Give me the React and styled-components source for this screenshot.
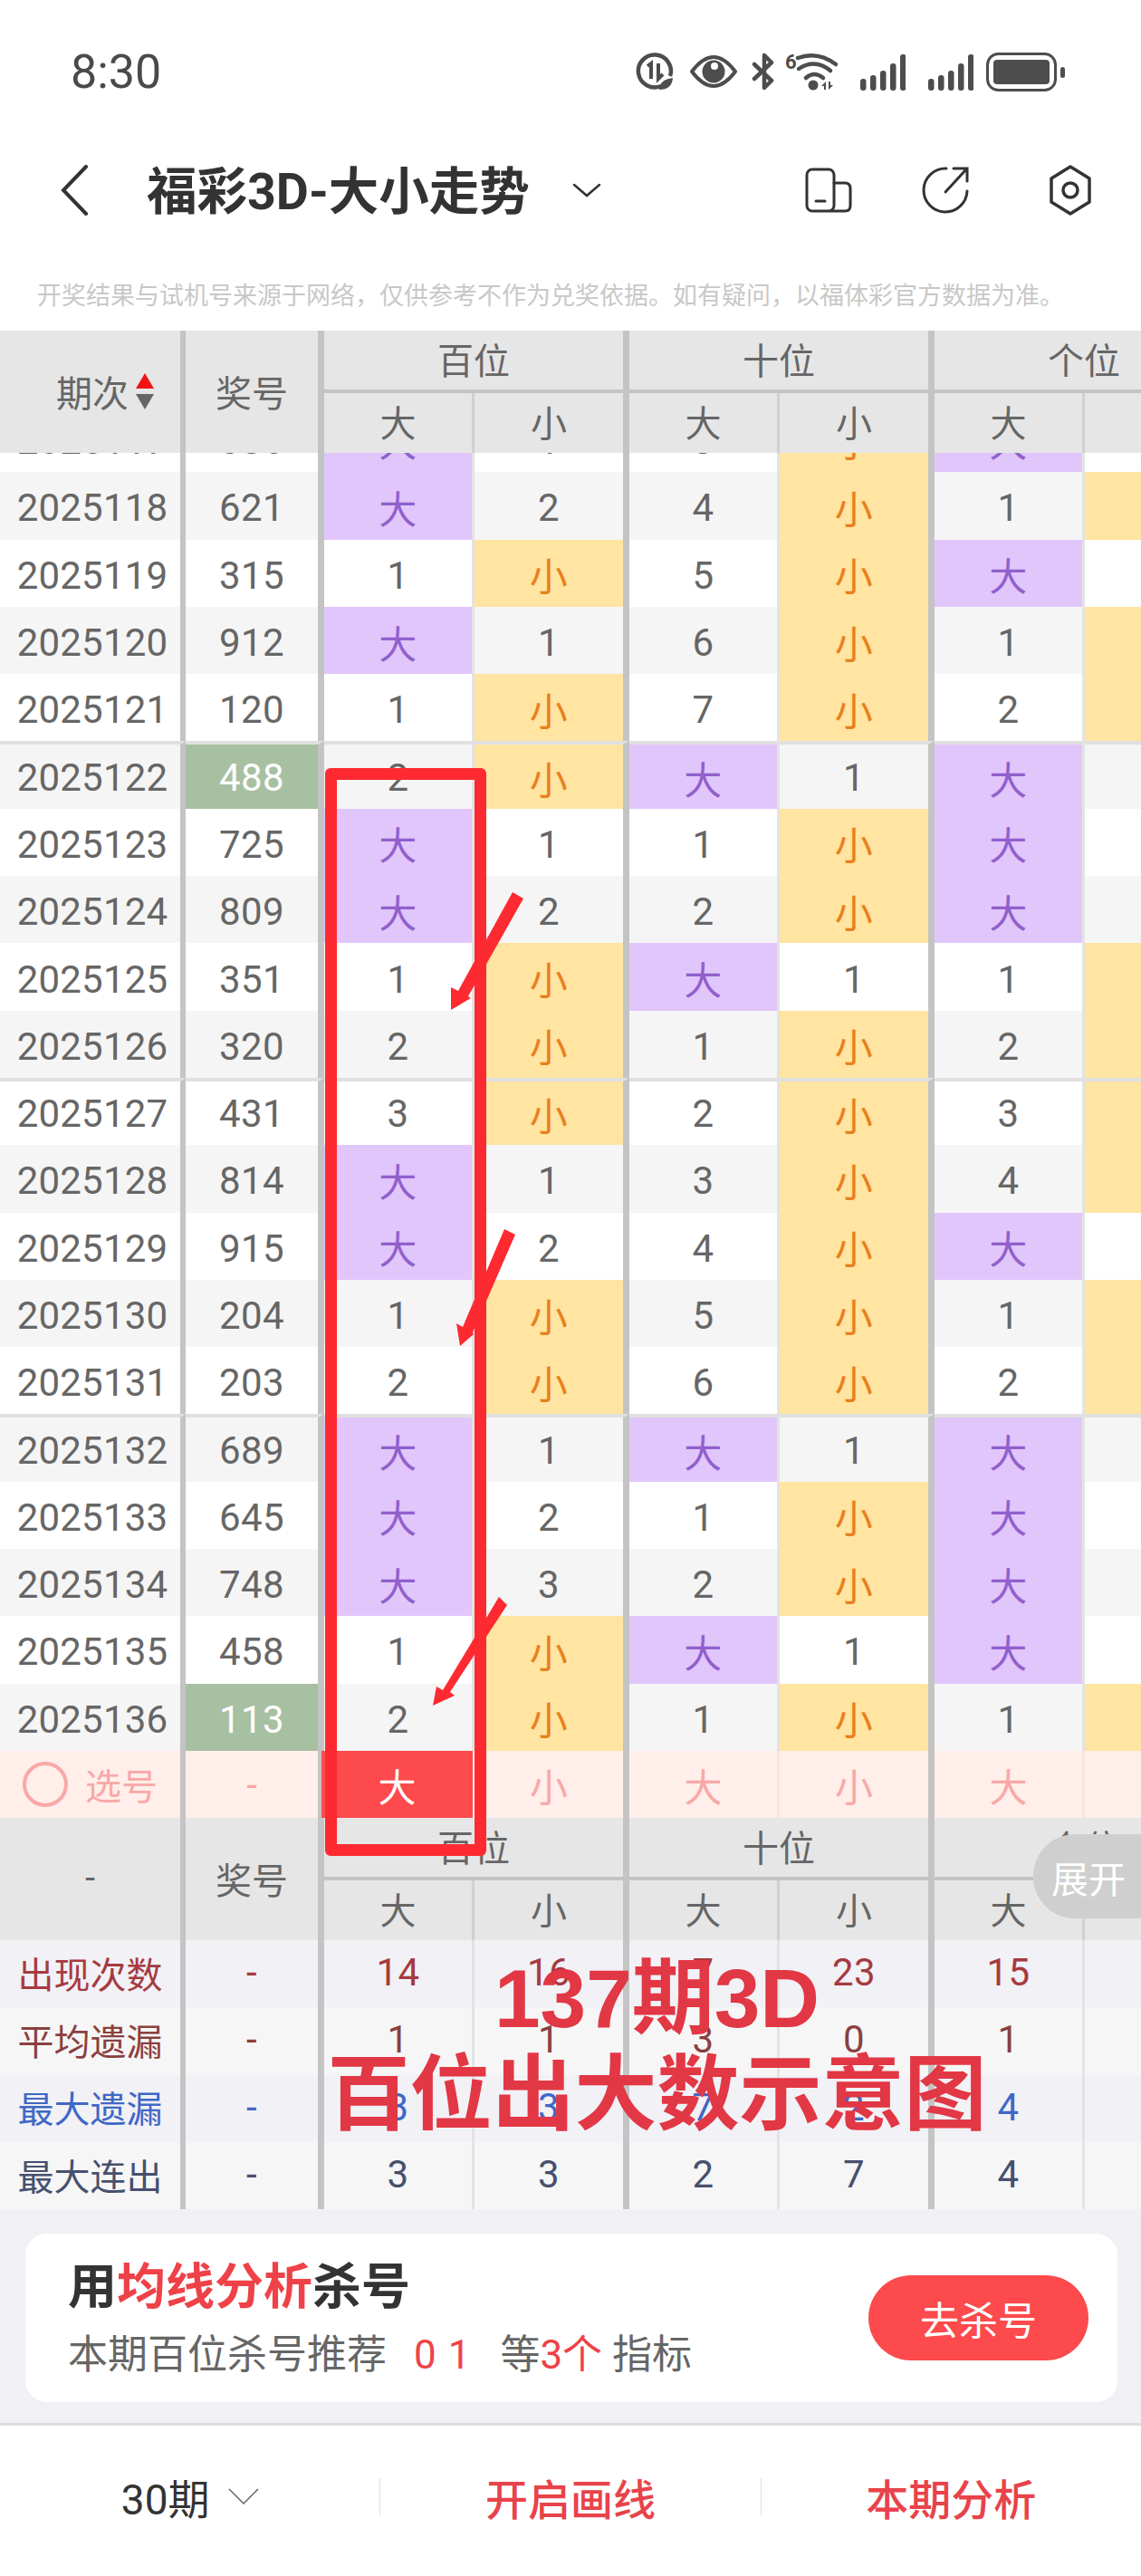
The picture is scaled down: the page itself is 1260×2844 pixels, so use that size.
import React from "react";
import styled, { createGlobalStyle } from "styled-components";

const SANS = `Roboto, "Noto Sans CJK SC", sans-serif`;
const COLUMNS = "205px 153px 166px 171px 166px 171px 166px 171px";
const THICK = "7px solid #c4c4c4";
const THIN = "3px solid #e3e3e3";

// negative = 大 on the left cell and the miss count on the right, positive = count then 小
const ROWS = [
  ["2025117", "836", -1, 3, -1],
  ["2025118", "621", -2, 4, 1],
  ["2025119", "315", 1, 5, -1],
  ["2025120", "912", -1, 6, 1],
  ["2025121", "120", 1, 7, 2],
  ["2025122", "488", 2, -1, -1, true],
  ["2025123", "725", -1, 1, -2],
  ["2025124", "809", -2, 2, -3],
  ["2025125", "351", 1, -1, 1],
  ["2025126", "320", 2, 1, 2],
  ["2025127", "431", 3, 2, 3],
  ["2025128", "814", -1, 3, 4],
  ["2025129", "915", -2, 4, -1],
  ["2025130", "204", 1, 5, 1],
  ["2025131", "203", 2, 6, 2],
  ["2025132", "689", -1, -1, -1],
  ["2025133", "645", -2, 1, -2],
  ["2025134", "748", -3, 2, -3],
  ["2025135", "458", 1, -1, -4],
  ["2025136", "113", 2, 1, 1, true],
];

const STATS = [
  ["出现次数", "#a63a3f", ["14", "16", "7", "23", "15", "7"]],
  ["平均遗漏", "#8a4040", ["1", "1", "3", "0", "1", "3"]],
  ["最大遗漏", "#3f68c6", ["3", "3", "7", "2", "4", "3"]],
  ["最大连出", "#46506e", ["3", "3", "2", "7", "4", "3"]],
];

const ARROWS = [
  "566,985 578,992 517,1100 520,1102 498,1115 498,1090 506,1094",
  "557,1357 569,1363 522,1471 523,1473 508,1486 504,1461 511,1465",
  "551,1763 560,1772 497,1868 502,1872 478,1883 482,1862 489,1866",
];

function App() {
  return (
    <Page>
      <GlobalStyle />
      <StatusBar>
        <Clock>8:30</Clock>
        <StatusIcons>
          <DataSaverIcon />
          <EyeIcon />
          <BluetoothIcon />
          <WifiIcon />
          <SignalIcon />
          <SignalIcon />
          <BatteryIcon />
        </StatusIcons>
      </StatusBar>

      <NavBar>
        <NavIcon width="32" height="56" viewBox="0 0 32 56">
          <path d="M29 2 L4 28 L29 54" strokeWidth="4" />
        </NavIcon>
        <Title>福彩3D-大小走势</Title>
        <NavIcon $ml={47} width="32" height="16" viewBox="0 0 32 16">
          <path d="M2 2 L16 14 L30 2" strokeWidth="2.5" />
        </NavIcon>
        <NavActions>
          <NavIcon width="52" height="50" viewBox="0 0 52 50">
            <rect x="2" y="2" width="30" height="46" rx="6" strokeWidth="3" />
            <path d="M32 17 H44 Q50 17 50 23 V42 Q50 48 44 48 H28" strokeWidth="3" />
            <path d="M12 37 H22" strokeWidth="3" />
          </NavIcon>
          <NavIcon $ml={77} width="52" height="52" viewBox="0 0 52 52">
            <path d="M27 2 A24 24 0 1 0 50 27" strokeWidth="3" />
            <path d="M26 28 L49 3 M35 2 H50 V16" strokeWidth="3" />
          </NavIcon>
          <NavIcon $ml={88} width="48" height="56" viewBox="0 0 48 56">
            <path d="M24 2 L45 15 V41 L24 54 L3 41 V15 Z" strokeWidth="3.5" strokeLinejoin="round" />
            <circle cx="24" cy="28" r="8" strokeWidth="3.5" />
          </NavIcon>
        </NavActions>
      </NavBar>

      <Notice>开奖结果与试机号来源于网络，仅供参考不作为兑奖依据。如有疑问，以福体彩官方数据为准。</Notice>

      <TableHeader
        first={
          <Period>
            期次
            <SortIcon width="22" height="40" viewBox="0 0 22 40">
              <polygon points="11,0 21,17 1,17" fill="#f01414" />
              <polygon points="1,23 21,23 11,40" fill="#666666" />
            </SortIcon>
          </Period>
        }
      />

      <Scroller>
        <ScrollInner>
          {ROWS.map((row, i) => (
            <DataRow key={row[0]} row={row} alt={i % 2 === 1} divider={i > 0 && i % 5 === 0} />
          ))}
          <PickRow>
            <PickCell $sep="thick6" $label>
              <PickCircle />
              选号
            </PickCell>
            <PickCell $sep="thick">-</PickCell>
            <PickedCell>大</PickedCell>
            <PickCell $sep="thick">小</PickCell>
            <PickCell $sep="thin">大</PickCell>
            <PickCell $sep="thick">小</PickCell>
            <PickCell $sep="thin">大</PickCell>
            <PickCell $sep="thick">小</PickCell>
          </PickRow>
        </ScrollInner>
      </Scroller>

      <LowerTable>
        <TableHeader first={<Dash>-</Dash>} />
        <ExpandTab>展开</ExpandTab>
      </LowerTable>

      {STATS.map(([label, color, values], i) => (
        <Row key={label} $bg={i % 2 === 0 ? "#f1f1f6" : "#f6f6f6"}>
          <StatLabel $color={color}>{label}</StatLabel>
          <Cell $sep="thick" $color={color}>-</Cell>
          {values.map((v, j) => (
            <Cell key={j} $sep={j % 2 === 0 ? "thin" : "thick"} $color={color}>{v}</Cell>
          ))}
        </Row>
      ))}

      <PromoBand>
        <PromoCard>
          <PromoText>
            <PromoTitle>用<Red>均线分析</Red>杀号</PromoTitle>
            <PromoSub>
              本期百位杀号推荐<PromoNums>0 1</PromoNums>等<Red>3个</Red> 指标
            </PromoSub>
          </PromoText>
          <PromoButton>去杀号</PromoButton>
        </PromoCard>
      </PromoBand>

      <Footer>
        <FooterItem>
          30期
          <FooterChevron width="34" height="18" viewBox="0 0 34 18">
            <path d="M1 1 L17 17 L33 1" />
          </FooterChevron>
        </FooterItem>
        <FooterDivider />
        <FooterItem $red>开启画线</FooterItem>
        <FooterDivider />
        <FooterItem $red>本期分析</FooterItem>
      </Footer>

      <MarkBox />
      <MarkArrows width="1260" height="2844" viewBox="0 0 1260 2844">
        {ARROWS.map((points) => (
          <polygon key={points} points={points} fill="#fe2a31" />
        ))}
      </MarkArrows>
      <Caption>
        137期3D
        <br />
        百位出大数示意图
      </Caption>
    </Page>
  );
}

function TableHeader({ first }) {
  return (
    <HeaderGrid>
      <HeaderSide $sep="6px">{first}</HeaderSide>
      <HeaderSide $sep="7px">奖号</HeaderSide>
      {["百位", "十位", "个位"].map((name) => (
        <HeaderGroup key={name}>
          <GroupName>{name}</GroupName>
          <GroupSplit>
            <SubHead $thin>大</SubHead>
            <SubHead>小</SubHead>
          </GroupSplit>
        </HeaderGroup>
      ))}
    </HeaderGrid>
  );
}

function DataRow({ row, alt, divider }) {
  const [period, prize, hundreds, tens, ones, hit] = row;
  return (
    <Row $bg={alt ? "#f5f5f5" : "#ffffff"}>
      <PeriodCell $sep="thick6" $top={divider}>{period}</PeriodCell>
      <DataCell $sep="thick" $top={divider} $hit={hit}>{prize}</DataCell>
      {[hundreds, tens, ones].map((v, i) => (
        <React.Fragment key={i}>
          {v < 0 ? (
            <DataCell $sep="thin" $top={divider} $fill="big">大</DataCell>
          ) : (
            <DataCell $sep="thin" $top={divider}>{v}</DataCell>
          )}
          {v < 0 ? (
            <DataCell $sep="thick" $top={divider}>{-v}</DataCell>
          ) : (
            <DataCell $sep="thick" $top={divider} $fill="small">小</DataCell>
          )}
        </React.Fragment>
      ))}
    </Row>
  );
}

function Ico({ children, width, height, ml }) {
  return (
    <StatusSvg $ml={ml} width={width} height={height} viewBox={`0 0 ${width} ${height}`}>
      {children}
    </StatusSvg>
  );
}

const DataSaverIcon = () => (
  <Ico width={42} height={42}>
    <path d="M28 37 A18 18 0 1 1 38 26" fill="none" stroke="#4d4d4d" strokeWidth="4.5" />
    <path d="M13 15 L17 12 V29 M25 12 V29 L30 24" fill="none" stroke="#4d4d4d" strokeWidth="4" />
    <path d="M26 41 Q26 30 41 28 Q40 41 26 41 Z" fill="#4d4d4d" />
  </Ico>
);

const EyeIcon = () => (
  <Ico width={54} height={38} ml={17}>
    <path d="M3 19 Q15 3 27 3 Q39 3 51 19 Q39 35 27 35 Q15 35 3 19 Z" fill="none" stroke="#4d4d4d" strokeWidth="4" strokeLinejoin="round" />
    <circle cx="27" cy="19" r="12.5" fill="#4d4d4d" />
    <circle cx="28" cy="13" r="4" fill="#ffffff" />
  </Ico>
);

const BluetoothIcon = () => (
  <Ico width={26} height={42} ml={15}>
    <path d="M3 13 L22 31 L14 39 V3 L22 11 L3 29" fill="none" stroke="#4d4d4d" strokeWidth="4.5" strokeLinejoin="round" strokeLinecap="round" />
  </Ico>
);

const WifiIcon = () => (
  <Ico width={58} height={42} ml={11}>
    <text x="0" y="18" fontFamily="Roboto, sans-serif" fontWeight="700" fontSize="22" fill="#4d4d4d">6</text>
    <path d="M14 6 Q36 -2 56 13" fill="none" stroke="#4d4d4d" strokeWidth="4.5" strokeLinecap="round" />
    <path d="M15 18 Q33 6 50 20" fill="none" stroke="#4d4d4d" strokeWidth="4.5" strokeLinecap="round" />
    <path d="M23 28 Q32 20 42 28" fill="none" stroke="#4d4d4d" strokeWidth="4.5" strokeLinecap="round" />
    <circle cx="31" cy="36" r="5.5" fill="#4d4d4d" />
    <path d="M40 37 L45 32 V41 H43 V37 Z M48 32 V41 L53 36 H50 V32 Z" fill="#4d4d4d" />
  </Ico>
);

const SignalIcon = () => (
  <Ico width={50} height={41} ml={25}>
    {[13, 17, 22, 30, 40].map((h, i) => (
      <rect key={i} x={i * 11} y={41 - h} width="6.5" height={h} rx="3" fill="#4d4d4d" />
    ))}
  </Ico>
);

const BatteryIcon = () => (
  <Ico width={87} height={43} ml={14}>
    <rect x="1.5" y="1.5" width="75" height="40" rx="12" fill="none" stroke="#4d4d4d" strokeWidth="3" />
    <rect x="8" y="8" width="62" height="27" rx="4" fill="#4d4d4d" />
    <rect x="82" y="16" width="5" height="12" rx="2.5" fill="#4d4d4d" />
  </Ico>
);

export default App;

const GlobalStyle = createGlobalStyle`
  html, body {
    margin: 0;
    padding: 0;
    background: #ffffff;
  }
  * {
    box-sizing: border-box;
  }
`;

const Page = styled.div`
  position: relative;
  width: 1260px;
  height: 2844px;
  overflow: hidden;
  background: #ffffff;
  font-family: ${SANS};
`;

const StatusBar = styled.div`
  display: flex;
  align-items: center;
  justify-content: space-between;
  height: 158px;
  padding: 0 84px 0 78px;
`;

const Clock = styled.div`
  font-size: 52px;
  color: #4a4a4a;
`;

const StatusIcons = styled.div`
  display: flex;
  align-items: center;
`;

const StatusSvg = styled.svg`
  display: block;
  margin-left: ${(p) => p.$ml || 0}px;
`;

const NavBar = styled.div`
  display: flex;
  align-items: center;
  height: 112px;
  padding: 0 54px 8px 66px;
`;

const NavIcon = styled.svg`
  display: block;
  flex: none;
  margin-left: ${(p) => p.$ml || 0}px;
  fill: none;
  stroke: #333333;
  stroke-linecap: round;
`;

const Title = styled.div`
  margin: -6px 0 0 64px;
  font-size: 55.5px;
  font-weight: 700;
  color: #333333;
  white-space: nowrap;
`;

const NavActions = styled.div`
  display: flex;
  align-items: center;
  margin-left: auto;
`;

const Notice = styled.div`
  display: flex;
  align-items: center;
  height: 95px;
  padding: 14px 0 0 41px;
  font-size: 27px;
  color: #c8c8c8;
  white-space: nowrap;
`;

const HeaderGrid = styled.div`
  display: grid;
  grid-template-columns: 205px 153px 337px 337px 337px;
  height: 135px;
  background: #e6e6e6;
  color: #666666;
  font-size: 40px;
`;

const HeaderSide = styled.div`
  display: flex;
  align-items: center;
  justify-content: center;
  padding-bottom: 2px;
  border-right: ${(p) => p.$sep} solid #c4c4c4;
`;

const Period = styled.div`
  display: flex;
  align-items: center;
  align-self: stretch;
  width: 100%;
  padding-left: 62px;
`;

const SortIcon = styled.svg`
  display: block;
  margin-left: 7px;
`;

const Dash = styled.span`
  color: #666666;
`;

const HeaderGroup = styled.div`
  display: flex;
  flex-direction: column;
  border-right: ${THICK};
`;

const GroupName = styled.div`
  display: flex;
  align-items: center;
  justify-content: center;
  height: 69px;
  padding-bottom: 4px;
  border-bottom: 4px solid #c4c4c4;
`;

const GroupSplit = styled.div`
  display: grid;
  grid-template-columns: 166px 1fr;
  flex: 1;
`;

const SubHead = styled.div`
  display: flex;
  align-items: center;
  justify-content: center;
  padding-bottom: 4px;
  border-right: ${(p) => (p.$thin ? "3px solid #d0d0d0" : "none")};
`;

const Scroller = styled.div`
  height: 1507px;
  overflow: hidden;
`;

const ScrollInner = styled.div`
  margin-top: -53px;
`;

const Row = styled.div`
  display: grid;
  grid-template-columns: ${COLUMNS};
  height: 74.3px;
  background: ${(p) => p.$bg};
`;

const fillBg = { big: "#e1c6fb", small: "#ffe4a2" };
const fillText = { big: "#9060cc", small: "#e8801c" };

const sepStyle = (sep) => {
  if (sep === "thick6") return "6px solid #c4c4c4";
  if (sep === "thick") return THICK;
  return THIN;
};

const Cell = styled.div`
  display: flex;
  align-items: center;
  justify-content: center;
  padding-bottom: 3px;
  font-size: 42px;
  letter-spacing: 0.4px;
  white-space: nowrap;
  color: ${(p) => (p.$hit ? "#ffffff" : fillText[p.$fill] || p.$color || "#666666")};
  background: ${(p) => (p.$hit ? "#a8c0a2" : fillBg[p.$fill] || "transparent")};
  border-right: ${(p) => sepStyle(p.$sep)};
  border-top: ${(p) => (p.$top ? "4px solid #e0e0e0" : "none")};
`;

const DataCell = styled(Cell)`
  padding: ${(p) => (p.$top ? 1 : p.$fill ? 2 : 5)}px 0 0;
`;

const PeriodCell = styled(DataCell)`
  padding-left: 5px;
  letter-spacing: 0.2px;
`;

const StatLabel = styled.div`
  display: flex;
  align-items: center;
  justify-content: center;
  padding-bottom: 3px;
  font-size: 40px;
  color: ${(p) => p.$color};
  border-right: 6px solid #c4c4c4;
`;

const PickRow = styled.div`
  display: grid;
  grid-template-columns: ${COLUMNS};
  height: 74.4px;
  background: #ffeee9;
`;

const PickCell = styled.div`
  display: flex;
  align-items: center;
  justify-content: center;
  font-size: ${(p) => (p.$label ? 40 : 42)}px;
  color: #f8a8a8;
  border-right: ${(p) => (p.$sep === "thin" ? "3px solid #f4e6e2" : sepStyle(p.$sep))};
`;

const PickCircle = styled.span`
  width: 50px;
  height: 50px;
  margin-right: 19px;
  border: 4px solid #f8a8a8;
  border-radius: 50%;
`;

const PickedCell = styled.div`
  display: flex;
  align-items: center;
  justify-content: center;
  margin-left: -3px;
  margin-right: 2px;
  font-size: 42px;
  color: #ffffff;
  background: #fc4a4d;
`;

const LowerTable = styled.div`
  position: relative;
`;

const ExpandTab = styled.div`
  position: absolute;
  top: 18px;
  right: 0;
  display: flex;
  align-items: center;
  justify-content: center;
  width: 119px;
  height: 93px;
  padding-left: 3px;
  border-radius: 46px 0 0 46px;
  background: #cfcfcf;
  color: #ffffff;
  font-size: 41px;
`;

const PromoBand = styled.div`
  height: 239px;
  padding: 27px 26px 0 28px;
  background: #f1f1f5;
  border-bottom: 3px solid #dedede;
`;

const PromoCard = styled.div`
  display: flex;
  align-items: center;
  justify-content: space-between;
  height: 186px;
  padding: 0 32px 0 47px;
  background: #ffffff;
  border-radius: 24px;
`;

const PromoText = styled.div`
  display: flex;
  flex-direction: column;
  gap: 13px;
  padding-top: 2px;
`;

const PromoTitle = styled.div`
  font-size: 54px;
  line-height: 66px;
  font-weight: 700;
  color: #333333;
`;

const Red = styled.span`
  color: #ee4248;
`;

const PromoSub = styled.div`
  font-size: 44px;
  line-height: 56px;
  color: #666666;
  white-space: pre;
`;

const PromoNums = styled.span`
  margin: 0 33px 0 30px;
  color: #ee4248;
  word-spacing: 2px;
`;

const PromoButton = styled.div`
  display: flex;
  align-items: center;
  justify-content: center;
  width: 243px;
  height: 94px;
  border-radius: 47px;
  background: #fc4a4d;
  color: #ffffff;
  font-size: 43px;
`;

const Footer = styled.div`
  display: flex;
  align-items: center;
  height: 162px;
  padding-bottom: 6px;
`;

const FooterItem = styled.div`
  display: flex;
  flex: 1;
  align-items: center;
  justify-content: center;
  font-size: ${(p) => (p.$red ? 47 : 46)}px;
  font-weight: ${(p) => (p.$red ? 500 : 400)};
  color: ${(p) => (p.$red ? "#e8434a" : "#333333")};
`;

const FooterDivider = styled.div`
  width: 1px;
  height: 41px;
  background: #e0e0e0;
`;

const FooterChevron = styled.svg`
  display: block;
  margin-left: 20px;
  fill: none;
  stroke: #666666;
  stroke-width: 1.5;
`;

const MarkBox = styled.div`
  position: absolute;
  left: 359px;
  top: 848px;
  width: 178px;
  height: 1201px;
  border: 13px solid #fe2a31;
  border-radius: 6px;
`;

const MarkArrows = styled.svg`
  position: absolute;
  left: 0;
  top: 0;
  pointer-events: none;
`;

const Caption = styled.div`
  position: absolute;
  left: 360px;
  top: 2154px;
  width: 731px;
  font-family: "Liberation Sans", "Noto Sans CJK SC", sans-serif;
  font-size: 91px;
  line-height: 106px;
  font-weight: 700;
  color: #e23744;
  text-align: center;
  white-space: nowrap;
`;
